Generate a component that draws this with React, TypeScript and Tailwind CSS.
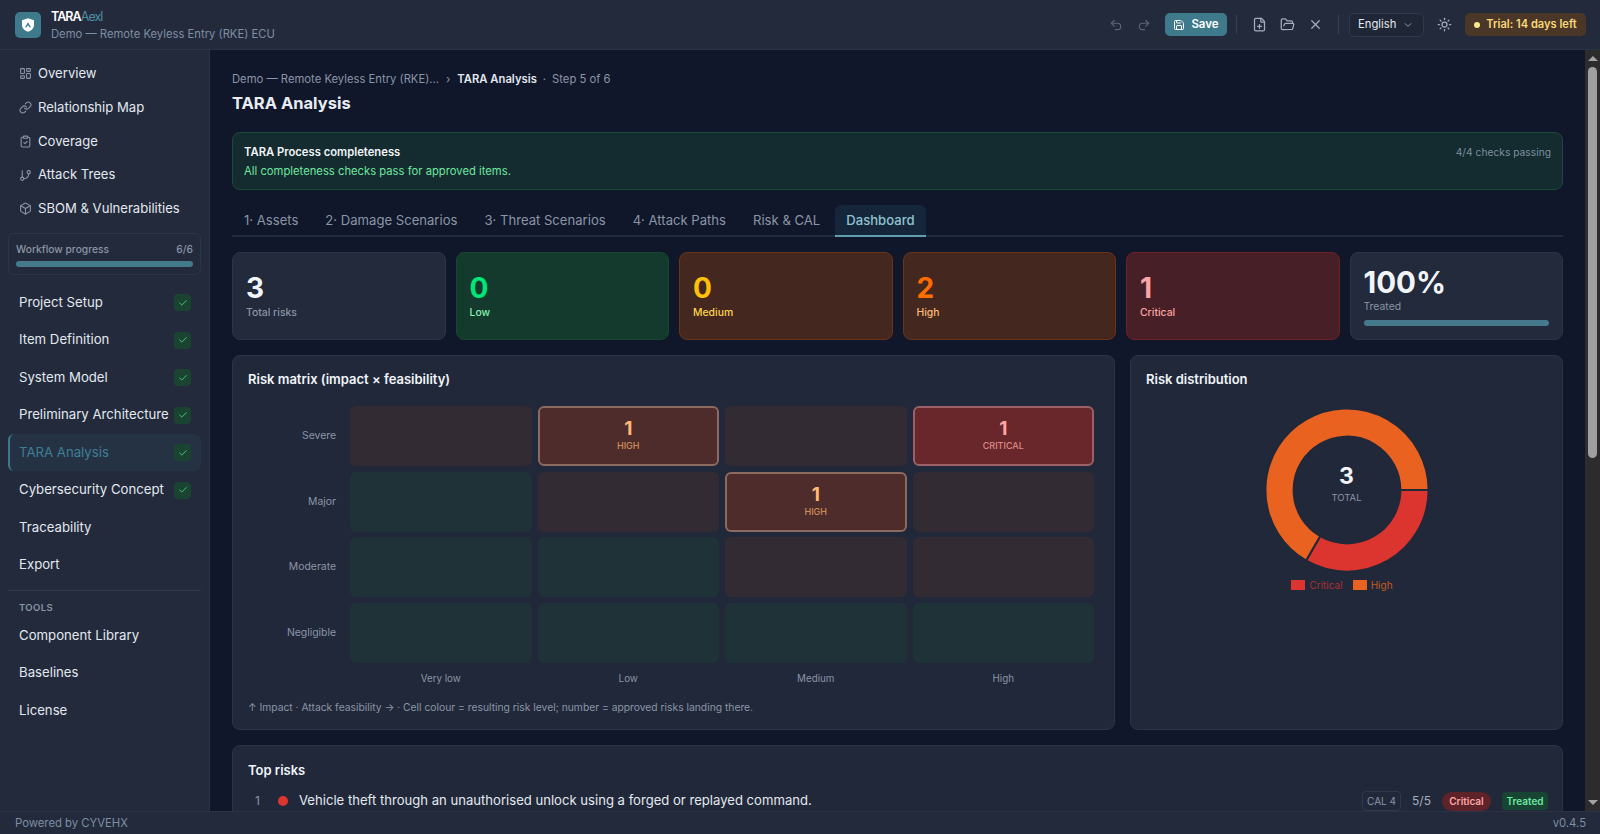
import { Box, Check, ChevronDown, ClipboardCheck, FilePlus, FolderOpen, GitBranch, LayoutDashboard, Link, Redo2, Save, Sun, Undo2, X } from "lucide-react";

const quickLinks = [
  { label: "Overview", icon: LayoutDashboard },
  { label: "Relationship Map", icon: Link },
  { label: "Coverage", icon: ClipboardCheck },
  { label: "Attack Trees", icon: GitBranch },
  { label: "SBOM & Vulnerabilities", icon: Box },
];

const steps = [
  { label: "Project Setup", done: true },
  { label: "Item Definition", done: true },
  { label: "System Model", done: true },
  { label: "Preliminary Architecture", done: true },
  { label: "TARA Analysis", done: true, active: true },
  { label: "Cybersecurity Concept", done: true },
  { label: "Traceability", done: false },
  { label: "Export", done: false },
];

const tabs = ["1· Assets", "2· Damage Scenarios", "3· Threat Scenarios", "4· Attack Paths", "Risk & CAL"];

const stats = [
  { value: "3", label: "Total risks", box: "bg-[#222a3b] border-[#2c3548]", num: "text-[#f1f5f9]", text: "text-[#8b95a7]" },
  { value: "0", label: "Low", box: "bg-[#143a2d] border-[#18472f]", num: "text-[#00e676]", text: "text-[#86efac]" },
  { value: "0", label: "Medium", box: "bg-[#44271f] border-[#6e3219]", num: "text-[#ffc107]", text: "text-[#fcd34d]" },
  { value: "2", label: "High", box: "bg-[#44271f] border-[#6e3219]", num: "text-[#ff6d00]", text: "text-[#fdba74]" },
  { value: "1", label: "Critical", box: "bg-[#471f26] border-[#6f2025]", num: "text-[#fca5a5]", text: "text-[#fca5a5]" },
];

type Cell = { tone: "low" | "mid" | "high" | "critical"; count?: number; name?: string };

const matrix: { label: string; cells: Cell[] }[] = [
  { label: "Severe", cells: [{ tone: "mid" }, { tone: "high", count: 1, name: "HIGH" }, { tone: "mid" }, { tone: "critical", count: 1, name: "CRITICAL" }] },
  { label: "Major", cells: [{ tone: "low" }, { tone: "mid" }, { tone: "high", count: 1, name: "HIGH" }, { tone: "mid" }] },
  { label: "Moderate", cells: [{ tone: "low" }, { tone: "low" }, { tone: "mid" }, { tone: "mid" }] },
  { label: "Negligible", cells: [{ tone: "low" }, { tone: "low" }, { tone: "low" }, { tone: "low" }] },
];

function MatrixCell({ cell }: { cell: Cell }) {
  if (cell.tone === "low") return <div className="h-[60px] rounded-md bg-[#1f3238]" />;
  if (cell.tone === "mid") return <div className="h-[60px] rounded-md bg-[#332b34]" />;
  const high = cell.tone === "high";
  return (
    <div
      className={`flex h-[60px] flex-col items-center justify-center rounded-md border-2 pb-[2px] ${
        high ? "border-[#8c6a60] bg-[#4e2c2b]" : "border-[#9a6065] bg-[#6a272b]"
      }`}
    >
      <span className={`text-[19px] leading-[22px] font-bold ${high ? "text-[#fdba74]" : "text-[#fca5a5]"}`}>{cell.count}</span>
      <span className={`text-[9px] leading-[12px] font-medium ${high ? "text-[#d08c58]" : "text-[#dc8a8a]"}`}>{cell.name}</span>
    </div>
  );
}

function Donut() {
  return (
    <div className="relative mt-[16px] h-[170px] w-[170px]">
      <svg viewBox="0 0 170 170" className="h-full w-full">
        <path d="M166.6 85 A81.6 81.6 0 1 0 44.2 155.7 L58.3 131.25 A53.4 53.4 0 1 1 138.4 85 Z" fill="#e96220" stroke="#212839" strokeWidth="2" />
        <path d="M166.6 85 A81.6 81.6 0 0 1 44.2 155.7 L58.3 131.25 A53.4 53.4 0 0 0 138.4 85 Z" fill="#dc3530" stroke="#212839" strokeWidth="2" />
      </svg>
      <div className="absolute inset-0 flex flex-col items-center justify-center pb-[12px]">
        <span className="text-[23px] leading-[24px] font-bold text-[#f1f5f9]">3</span>
        <span className="mt-[3px] text-[9.5px] leading-[14px] text-[#8b95a7]">TOTAL</span>
      </div>
    </div>
  );
}

function Scrollbar() {
  return (
    <div className="flex w-[15px] shrink-0 flex-col items-center bg-[#2c2c2c]">
      <div className="flex h-[17px] items-center justify-center">
        <div className="h-0 w-0 border-x-[5px] border-b-[5px] border-x-transparent border-b-[#a3a3a3]" />
      </div>
      <div className="h-[391px] w-[9px] rounded-full bg-[#9f9f9f]" />
      <div className="flex-1" />
      <div className="flex h-[17px] items-center justify-center">
        <div className="h-0 w-0 border-x-[5px] border-t-[5px] border-x-transparent border-t-[#a3a3a3]" />
      </div>
    </div>
  );
}

export default function App() {
  return (
    <div className="flex h-screen flex-col overflow-hidden bg-[#10172a] font-[Inter,sans-serif] text-[#e2e8f0]">
      <header className="flex h-[50px] shrink-0 items-center border-b border-[#2b3446] bg-[#222a3b] pr-[14px] pl-[15px]">
        <div className="flex h-[26px] w-[26px] items-center justify-center rounded-[5px] bg-[#3f7a8c]">
          <svg viewBox="0 0 24 24" className="h-[16px] w-[16px]">
            <path d="M12 2 L21 5 V12 C21 17 17 20.5 12 22 C7 20.5 3 17 3 12 V5 Z" fill="#fff" />
            <path d="M12 8 L16.5 15.5 H14 L12 12 L10 15.5 H7.5 Z" fill="#3f7a8c" />
          </svg>
        </div>
        <div className="ml-[10px] pt-[1px]">
          <div className="text-[12.5px] leading-[17px] font-semibold tracking-[-0.95px] text-white">
            TARA<span className="font-normal text-[#4e8fa3]">Aexl</span>
          </div>
          <div className="mt-[1px] text-[11.25px] leading-[17px] text-[#7f8ea3]">Demo — Remote Keyless Entry (RKE) ECU</div>
        </div>
        <div className="ml-auto flex items-center">
          <Undo2 size={14} className="text-[#5b6577]" />
          <Redo2 size={14} className="ml-[14px] text-[#5b6577]" />
          <button className="ml-[14px] flex h-[23px] w-[62px] items-center justify-center gap-[6px] rounded-[5px] bg-[#3f7a8c] text-[11.5px] font-semibold text-white">
            <Save size={12} />
            Save
          </button>
          <div className="ml-[9px] h-[19px] w-px bg-[#364053]" />
          <FilePlus size={15} className="ml-[15px] text-[#a3adbd]" />
          <FolderOpen size={15} className="ml-[13px] text-[#a3adbd]" />
          <X size={15} className="ml-[13px] text-[#a3adbd]" />
          <div className="ml-[15px] h-[19px] w-px bg-[#364053]" />
          <div className="ml-[10px] flex h-[24px] w-[75px] items-center justify-between rounded-[5px] border border-[#2e394d] bg-[#1f2737] pr-[9px] pl-[8px] text-[11.25px] text-[#e2e8f0]">
            English
            <ChevronDown size={12} className="text-[#8b95a7]" />
          </div>
          <Sun size={15} className="ml-[13px] text-[#a3adbd]" />
          <div className="ml-[13px] flex h-[23px] w-[121px] items-center justify-center gap-[6px] rounded-[5px] bg-[#4a3728] text-[11.1px] font-semibold text-[#fcd97a]">
            <span className="h-[6px] w-[6px] rounded-full bg-[#fde68a]" />
            Trial: 14 days left
          </div>
        </div>
      </header>

      <div className="flex min-h-0 flex-1">
        <aside className="flex w-[210px] shrink-0 flex-col border-r border-[#2b3446] bg-[#222a3b] px-[8px] pt-[7px]">
          {quickLinks.map(({ label, icon: Icon }) => (
            <div key={label} className="flex h-[33.75px] items-center gap-[6px] pl-[11px] text-[13.1px] text-[#e2e8f0]">
              <Icon size={13} className="text-[#8b95a7]" />
              {label}
            </div>
          ))}
          <div className="mt-[7px] h-[42px] rounded-md border border-[#2c3548] px-[7px] pt-[6px]">
            <div className="flex justify-between text-[10.25px] leading-[18px] font-medium text-[#8b95a7]">
              <span>Workflow progress</span>
              <span>6/6</span>
            </div>
            <div className="mt-[3px] h-[6px] rounded-full bg-[#45798c]" />
          </div>
          <div className="mt-[9px] flex flex-col">
            {steps.map((s) => (
              <div
                key={s.label}
                className={`flex h-[37.5px] items-center justify-between rounded-md pr-[10px] text-[13.2px] ${
                  s.active ? "border-l-2 border-[#3f7a8c] bg-[#253244] pl-[9px] text-[#3f7f96]" : "pl-[11px] text-[#e2e8f0]"
                }`}
              >
                {s.label}
                {s.done && (
                  <span className="flex h-[17px] w-[17px] items-center justify-center rounded-[4px] bg-[#1b4332]">
                    <Check size={10} className="text-[#4ade80]" />
                  </span>
                )}
              </div>
            ))}
          </div>
          <div className="mt-[6px] h-px bg-[#2f394c]" />
          <div className="mt-[11px] pl-[11px] text-[9.5px] leading-[12px] font-semibold tracking-[0.4px] text-[#8b95a7]">TOOLS</div>
          <div className="mt-[3px] flex flex-col">
            {["Component Library", "Baselines", "License"].map((t) => (
              <div key={t} className="flex h-[37.5px] items-center pl-[11px] text-[13.2px] text-[#e2e8f0]">
                {t}
              </div>
            ))}
          </div>
        </aside>

        <main className="min-w-0 flex-1 overflow-hidden px-[22px] pt-[20px]">
          <div className="flex items-center text-[11.25px] leading-[18px] text-[#8b95a7]">
            <span>Demo — Remote Keyless Entry (RKE)...</span>
            <span className="mx-[7px]">›</span>
            <span className="font-semibold text-[#e2e8f0]">TARA Analysis</span>
            <span className="mx-[6px]">·</span>
            <span>Step 5 of 6</span>
          </div>
          <h1 className="mt-[3px] text-[16.5px] leading-[25px] font-bold text-[#e8edf4]">TARA Analysis</h1>

          <div className="mt-[16px] flex h-[58px] justify-between rounded-lg border border-[#1c4a38] bg-[#142b2f] px-[11px] pt-[9px]">
            <div>
              <div className="text-[11.25px] leading-[20px] font-semibold text-[#f1f5f9]">TARA Process completeness</div>
              <div className="text-[11.25px] leading-[18px] text-[#6ee7a0]">All completeness checks pass for approved items.</div>
            </div>
            <div className="text-[10.25px] leading-[20px] text-[#7f8ea3]">4/4 checks passing</div>
          </div>

          <div className="mt-[15px] flex h-[32px] items-stretch gap-[3px] border-b-2 border-[#1f2a3c]">
            {tabs.map((t) => (
              <div key={t} className="flex items-center px-[12px] pt-[1px] text-[13.1px] text-[#8b95a7]">
                {t}
              </div>
            ))}
            <div className="-mb-[2px] flex items-center rounded-t-md border-b-2 border-[#5f9fb0] bg-[#15263a] px-[11px] pt-[1px] text-[13.1px] font-medium text-[#8fc3d0]">
              Dashboard
            </div>
          </div>

          <div className="mt-[15px] grid h-[88px] grid-cols-6 gap-[10px]">
            {stats.map((s) => (
              <div key={s.label} className={`rounded-lg border pt-[19px] pl-[13px] ${s.box}`}>
                <div className={`text-[28px] leading-[33px] font-bold ${s.num}`}>{s.value}</div>
                <div className={`text-[10.4px] leading-[16px] font-medium ${s.text}`}>{s.label}</div>
              </div>
            ))}
            <div className="rounded-lg border border-[#2c3548] bg-[#222a3b] px-[13px] pt-[12px]">
              <div className="text-[29.5px] leading-[34px] font-bold text-[#f1f5f9]">100%</div>
              <div className="text-[10.4px] leading-[16px] text-[#8b95a7]">Treated</div>
              <div className="mt-[5px] h-[6px] rounded-full bg-[#45798c]" />
            </div>
          </div>

          <div className="mt-[15px] grid h-[375px] grid-cols-[883px_1fr] gap-[15px]">
            <section className="rounded-lg border border-[#2c3548] bg-[#212839] px-[15px] pt-[13px]">
              <h2 className="text-[13px] leading-[20px] font-semibold text-[#f1f5f9]">Risk matrix (impact × feasibility)</h2>
              <div className="mt-[17px] grid w-[846px] grid-cols-[96px_repeat(4,1fr)] gap-x-[6px] gap-y-[5.6px] text-[10.4px] text-[#8b95a7]">
                {matrix.map((row) => (
                  <div key={row.label} className="contents">
                    <div className="flex items-center justify-end pr-[8px]">{row.label}</div>
                    {row.cells.map((c, i) => (
                      <MatrixCell key={i} cell={c} />
                    ))}
                  </div>
                ))}
                <div />
                {["Very low", "Low", "Medium", "High"].map((t) => (
                  <div key={t} className="pt-[3px] text-center text-[9.8px] leading-[16px]">
                    {t}
                  </div>
                ))}
              </div>
              <p className="mt-[12px] text-[10.3px] leading-[16px] text-[#8b95a7]">
                ↑ Impact · Attack feasibility → · Cell colour = resulting risk level; number = approved risks landing there.
              </p>
            </section>
            <section className="flex flex-col rounded-lg border border-[#2c3548] bg-[#212839] px-[15px] pt-[13px]">
              <h2 className="text-[13px] leading-[20px] font-semibold text-[#f1f5f9]">Risk distribution</h2>
              <div className="flex flex-col items-center">
                <Donut />
                <div className="mt-[2px] flex items-center gap-[10px] pr-[9px] text-[10px] leading-[16px]">
                  <span className="flex items-center gap-[4px] text-[#a63333]">
                    <span className="h-[10px] w-[14px] bg-[#dc3530]" />
                    Critical
                  </span>
                  <span className="flex items-center gap-[4px] text-[#c55a20]">
                    <span className="h-[10px] w-[14px] bg-[#e96220]" />
                    High
                  </span>
                </div>
              </div>
            </section>
          </div>

          <section className="mt-[15px] h-[120px] rounded-lg border border-[#2c3548] bg-[#212839] px-[15px] pt-[14px]">
            <h2 className="text-[13px] leading-[20px] font-semibold text-[#f1f5f9]">Top risks</h2>
            <div className="mt-[11px] flex h-[20px] items-center">
              <span className="w-[30px] pl-[7px] text-[12px] text-[#8b95a7]">1</span>
              <span className="h-[10px] w-[10px] rounded-full bg-[#dc3530]" />
              <span className="ml-[11px] text-[13.1px] text-[#e2e8f0]">Vehicle theft through an unauthorised unlock using a forged or replayed command.</span>
              <div className="-mr-[1px] ml-auto flex items-center">
                <span className="flex h-[20px] w-[39px] items-center justify-center rounded-[4px] border border-[#2e394d] text-[10px] text-[#8b95a7]">CAL 4</span>
                <span className="ml-[11px] text-[12px] text-[#a3adbd]">5/5</span>
                <span className="ml-[11px] flex h-[19px] w-[49px] items-center justify-center rounded-full bg-[#5e2229] text-[10px] font-semibold text-[#fca5a5]">Critical</span>
                <span className="ml-[11px] flex h-[18px] w-[46px] items-center justify-center rounded-[4px] bg-[#174433] text-[10px] font-semibold text-[#6ee7a0]">Treated</span>
              </div>
            </div>
          </section>
        </main>

        <Scrollbar />
      </div>

      <footer className="flex h-[23px] shrink-0 items-center justify-between border-t border-[#2b3446] bg-[#222a3b] pt-[1px] pr-[14px] pl-[15px] text-[11.3px] text-[#7f8ea3]">
        <span>Powered by CYVEHX</span>
        <span>v0.4.5</span>
      </footer>
    </div>
  );
}
